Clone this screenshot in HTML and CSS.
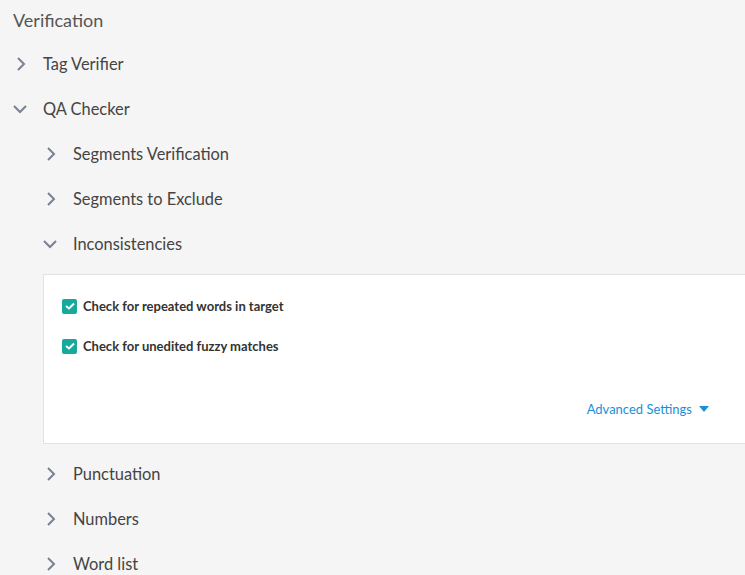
FILE: index.html
```html
<!DOCTYPE html>
<html lang="en">
<head>
    <meta charset="UTF-8">
    <title>Verification</title>
    <link rel="stylesheet" href="styles.css">
</head>
<body>
    <div class="page">
        <h1 class="title">Verification</h1>

        <div class="row">
            <span class="icon"><svg class="chev" width="12" height="16" viewBox="0 0 12 16"><polyline points="4,2 10,8 4,14"/></svg></span>
            <span>Tag Verifier</span>
        </div>
        <div class="row">
            <span class="icon"><svg class="chev" width="14" height="12" viewBox="0 0 14 12"><polyline points="1,3 7,9 13,3"/></svg></span>
            <span>QA Checker</span>
        </div>

        <div class="sub">
            <div class="row">
                <span class="icon"><svg class="chev" width="12" height="16" viewBox="0 0 12 16"><polyline points="4,2 10,8 4,14"/></svg></span>
                <span>Segments Verification</span>
            </div>
            <div class="row">
                <span class="icon"><svg class="chev" width="12" height="16" viewBox="0 0 12 16"><polyline points="4,2 10,8 4,14"/></svg></span>
                <span>Segments to Exclude</span>
            </div>
            <div class="row">
                <span class="icon"><svg class="chev" width="14" height="12" viewBox="0 0 14 12"><polyline points="1,3 7,9 13,3"/></svg></span>
                <span>Inconsistencies</span>
            </div>

            <div class="panel">
                <label class="check">
                    <span class="box"><svg width="10" height="8" viewBox="0 0 10 8"><polyline points="1,4 4,6.5 9,1.5"/></svg></span>
                    Check for repeated words in target
                </label>
                <label class="check">
                    <span class="box"><svg width="10" height="8" viewBox="0 0 10 8"><polyline points="1,4 4,6.5 9,1.5"/></svg></span>
                    Check for unedited fuzzy matches
                </label>
                <div class="advanced">
                    <span>Advanced Settings</span>
                    <span class="caret"></span>
                </div>
            </div>

            <div class="row">
                <span class="icon"><svg class="chev" width="12" height="16" viewBox="0 0 12 16"><polyline points="4,2 10,8 4,14"/></svg></span>
                <span>Punctuation</span>
            </div>
            <div class="row">
                <span class="icon"><svg class="chev" width="12" height="16" viewBox="0 0 12 16"><polyline points="4,2 10,8 4,14"/></svg></span>
                <span>Numbers</span>
            </div>
            <div class="row">
                <span class="icon"><svg class="chev" width="12" height="16" viewBox="0 0 12 16"><polyline points="4,2 10,8 4,14"/></svg></span>
                <span>Word list</span>
            </div>
        </div>
    </div>
</body>
</html>
```

FILE: styles.css
```css
* {
    margin: 0;
    padding: 0;
    box-sizing: border-box;
}

body {
    background-color: #f5f5f5;
    color: #444;
    font-family: "Lato", "Open Sans", sans-serif;
    overflow: hidden;
}

.page {
    padding-left: 13px;
}

.title {
    font-size: 18px;
    font-weight: 400;
    color: #555;
    height: 41px;
    line-height: 40px;
}

.row {
    display: flex;
    align-items: center;
    gap: 16px;
    height: 45px;
    font-size: 16.4px;
    color: #444;
}

.icon {
    width: 14px;
    display: flex;
    justify-content: center;
}

.chev {
    fill: none;
    stroke: #7b8094;
    stroke-width: 2;
}

.sub {
    padding-left: 30px;
}

.panel {
    background: #fff;
    border: 1px solid #e2e2e2;
    border-right: none;
    margin: 8px 0 7px;
    height: 170px;
    padding: 11px 0 0 18px;
}

.check {
    display: flex;
    align-items: center;
    font-size: 13px;
    font-weight: 700;
    color: #333;
    height: 40px;
}

.box {
    width: 15px;
    height: 15px;
    border-radius: 2px;
    background: #17a99b;
    display: flex;
    align-items: center;
    justify-content: center;
    margin-right: 6px;
}

.box svg {
    fill: none;
    stroke: #fff;
    stroke-width: 2;
}

.advanced {
    display: flex;
    justify-content: flex-end;
    align-items: center;
    padding-right: 36px;
    margin-top: 35px;
    font-size: 13px;
    line-height: 16px;
    color: #1b8fd8;
}

.caret {
    width: 0;
    height: 0;
    border-left: 5px solid transparent;
    border-right: 5px solid transparent;
    border-top: 6px solid #1b8fd8;
    margin-left: 7px;
}
```
